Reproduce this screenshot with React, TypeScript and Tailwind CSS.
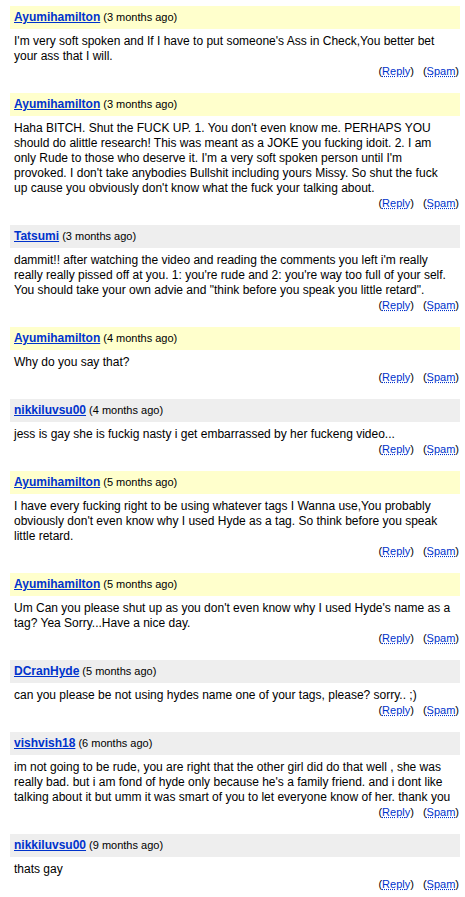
import React from "react";

type C = { user: string; ago: string; lines: string[]; yellow: boolean };

const comments: C[] = [
  { user: "Ayumihamilton", ago: "3 months ago", yellow: true, lines: ["I'm very soft spoken and If I have to put someone's Ass in Check,You better bet", "your ass that I will."] },
  { user: "Ayumihamilton", ago: "3 months ago", yellow: true, lines: [
    "Haha BITCH. Shut the FUCK UP. 1. You don't even know me. PERHAPS YOU",
    "should do alittle research! This was meant as a JOKE you fucking idoit. 2. I am",
    "only Rude to those who deserve it. I'm a very soft spoken person until I'm",
    "provoked. I don't take anybodies Bullshit including yours Missy. So shut the fuck",
    "up cause you obviously don't know what the fuck your talking about.",
  ] },
  { user: "Tatsumi", ago: "3 months ago", yellow: false, lines: [
    "dammit!! after watching the video and reading the comments you left i'm really",
    "really really pissed off at you. 1: you're rude and 2: you're way too full of your self.",
    "You should take your own advie and \"think before you speak you little retard\".",
  ] },
  { user: "Ayumihamilton", ago: "4 months ago", yellow: true, lines: ["Why do you say that?"] },
  { user: "nikkiluvsu00", ago: "4 months ago", yellow: false, lines: ["jess is gay she is fuckig nasty i get embarrassed by her fuckeng video..."] },
  { user: "Ayumihamilton", ago: "5 months ago", yellow: true, lines: [
    "I have every fucking right to be using whatever tags I Wanna use,You probably",
    "obviously don't even know why I used Hyde as a tag. So think before you speak",
    "little retard.",
  ] },
  { user: "Ayumihamilton", ago: "5 months ago", yellow: true, lines: [
    "Um Can you please shut up as you don't even know why I used Hyde's name as a",
    "tag? Yea Sorry...Have a nice day.",
  ] },
  { user: "DCranHyde", ago: "5 months ago", yellow: false, lines: ["can you please be not using hydes name one of your tags, please? sorry.. ;)"] },
  { user: "vishvish18", ago: "6 months ago", yellow: false, lines: [
    "im not going to be rude, you are right that the other girl did do that well , she was",
    "really bad. but i am fond of hyde only because he's a family friend. and i dont like",
    "talking about it but umm it was smart of you to let everyone know of her. thank you",
  ] },
  { user: "nikkiluvsu00", ago: "9 months ago", yellow: false, lines: ["thats gay"] },
];

function Comment({ c }: { c: C }) {
  return (
    <div className="mb-[15px]">
      <div className={`h-[23px] flex items-center pl-[4px] ${c.yellow ? "bg-[#ffffcc]" : "bg-[#eeeeee]"}`}>
        <a href="#" className="text-[12px] font-bold text-[#0033cc] underline leading-[15px]">{c.user}</a>
        <span className="text-[11px] text-black ml-[3px] leading-[15px]">({c.ago})</span>
      </div>
      <div className="pt-[5px] pl-[4px] text-[12px] leading-[15px] text-black">
        {c.lines.map((l, i) => (
          <div key={i} className="whitespace-nowrap">{l}</div>
        ))}
      </div>
      <div className="flex justify-end pr-[1px] text-[11px] leading-[14px] text-black gap-[9px]">
        <span>(<a href="#" className="text-[#0033cc] underline decoration-dotted">Reply</a>)</span>
        <span>(<a href="#" className="text-[#0033cc] underline decoration-dotted">Spam</a>)</span>
      </div>
    </div>
  );
}

export default function App() {
  return (
    <div className="w-[465px] min-h-[897px] bg-white pt-[6px] pl-[10px] pr-[5px]" style={{ fontFamily: '"Liberation Sans", Arial, sans-serif' }}>
      {comments.map((c, i) => (
        <Comment key={i} c={c} />
      ))}
    </div>
  );
}
